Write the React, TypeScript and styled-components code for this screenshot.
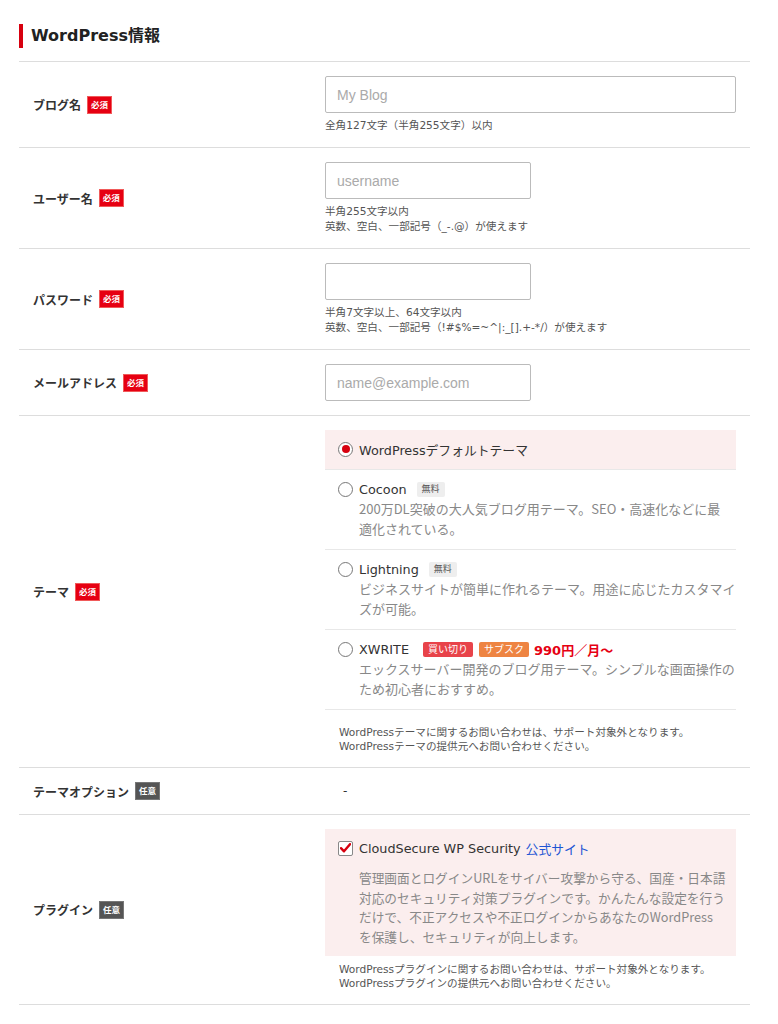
import React from "react";
import styled, { createGlobalStyle } from "styled-components";

const GlobalStyle = createGlobalStyle`
  body {
    margin: 0;
    background: #fff;
    color: #333;
    font-family: "DejaVu Sans", "Noto Sans CJK JP", sans-serif;
  }
`;

const Page = styled.div`
  padding: 24px 28px 20px 19px;
`;

const SectionTitle = styled.h2`
  margin: 0 0 13px;
  border-left: 4px solid #d7000f;
  padding-left: 8px;
  font-size: 16px;
  line-height: 24px;
  font-weight: bold;
  color: #222;
`;

const Table = styled.div`
  border-top: 1px solid #ddd;
`;

const Row = styled.div`
  display: grid;
  grid-template-columns: 306px minmax(0, 1fr);
  border-bottom: 1px solid #ddd;
`;

const LabelCell = styled.div`
  display: flex;
  align-items: center;
  gap: 6px;
  padding-left: 14px;
  font-size: 12px;
  font-weight: bold;
  color: #333;
`;

const ValueCell = styled.div<{ $indent?: boolean }>`
  min-width: 0;
  padding: 14px 14px 14px ${(p) => (p.$indent ? "18px" : "0")};
`;

const Badge = styled.span<{ $optional?: boolean }>`
  display: inline-block;
  background: ${(p) => (p.$optional ? "#555" : "#e60012")};
  color: #fff;
  font-size: 8.5px;
  font-weight: bold;
  line-height: 16px;
  padding: 0 3px;
  border: 1px solid ${(p) => (p.$optional ? "#777" : "#f05a5a")};
`;

const TextInput = styled.input<{ $short?: boolean }>`
  display: block;
  box-sizing: border-box;
  width: ${(p) => (p.$short ? "206px" : "100%")};
  height: 37px;
  border: 1px solid #bbb;
  border-radius: 2px;
  padding: 0 11px;
  font-family: "Liberation Sans", Arial, sans-serif;
  font-size: 14px;
  color: #333;
  &::placeholder {
    color: #aaa;
  }
`;

const Note = styled.div`
  margin-top: 5px;
  font-size: 10.6px;
  line-height: 15px;
  color: #555;
`;

const OptionList = styled.div``;

const Option = styled.div<{ $selected?: boolean }>`
  padding: 9px 13px 10px;
  background: ${(p) => (p.$selected ? "#fbeeee" : "#fff")};
  border-bottom: 1px solid #e8e8e8;
`;

const OptionHead = styled.div`
  display: flex;
  align-items: center;
  height: 20px;
  font-size: 12.8px;
  color: #333;
  white-space: nowrap;
`;

const Radio = styled.span<{ $checked?: boolean }>`
  box-sizing: border-box;
  width: 15px;
  height: 15px;
  margin-right: 6px;
  border-radius: 50%;
  border: 1.5px solid #777;
  background: #fff;
  display: flex;
  align-items: center;
  justify-content: center;
  flex-shrink: 0;
  &::after {
    content: "";
    display: ${(p) => (p.$checked ? "block" : "none")};
    width: 8px;
    height: 8px;
    border-radius: 50%;
    background: #d7000f;
  }
`;

const Tag = styled.span<{ $tone: "free" | "buy" | "sub" }>`
  display: inline-block;
  margin-left: ${(p) => (p.$tone === "sub" ? "6px" : p.$tone === "buy" ? "14px" : "10px")};
  padding: 0 5px;
  line-height: 15px;
  font-size: ${(p) => (p.$tone === "free" ? "9px" : "10px")};
  border-radius: 2px;
  background: ${(p) =>
    p.$tone === "free" ? "#eee" : p.$tone === "buy" ? "#e8434a" : "#ee8442"};
  color: ${(p) => (p.$tone === "free" ? "#555" : "#fff")};
`;

const Price = styled.span`
  margin-left: 5px;
  color: #e60012;
  font-weight: bold;
  font-size: 13px;
`;

const OptionDesc = styled.div`
  padding-left: 21px;
  font-family: "Noto Sans CJK JP", sans-serif;
  font-size: 13px;
  line-height: 20px;
  color: #888;
  white-space: nowrap;
`;

const ThemeNote = styled(Note)`
  margin-top: 15px;
  padding-left: 14px;
  line-height: 14px;
`;

const PluginBox = styled.div`
  background: #fbeeee;
  padding: 9px 13px 10px;
`;

const CheckMark = styled.span`
  box-sizing: border-box;
  width: 15px;
  height: 15px;
  margin-right: 6px;
  border: 1px solid #888;
  border-radius: 2px;
  background: #fff;
  display: flex;
  align-items: center;
  justify-content: center;
  flex-shrink: 0;
`;

const SiteLink = styled.a`
  margin-left: 5px;
  color: #1e55d4;
  text-decoration: none;
`;

const PluginDesc = styled(OptionDesc)`
  margin-top: 10px;
  font-size: 12.7px;
  line-height: 19.5px;
`;

const PluginNote = styled(Note)`
  margin-top: 6px;
  padding-left: 14px;
  line-height: 14px;
`;

const Dash = styled.div`
  font-size: 12px;
  line-height: 18px;
  color: #333;
`;

const Lines = ({ lines }: { lines: string[] }) => (
  <>
    {lines.map((l, i) => (
      <React.Fragment key={i}>
        {i > 0 && <br />}
        {l}
      </React.Fragment>
    ))}
  </>
);

const themes = [
  {
    name: "Cocoon",
    desc: [
      "200万DL突破の大人気ブログ用テーマ。SEO・高速化などに最",
      "適化されている。",
    ],
  },
  {
    name: "Lightning",
    desc: [
      "ビジネスサイトが簡単に作れるテーマ。用途に応じたカスタマイ",
      "ズが可能。",
    ],
  },
];

export default function App() {
  return (
    <Page>
      <GlobalStyle />
      <SectionTitle>WordPress情報</SectionTitle>
      <Table>
        <Row>
          <LabelCell>
            ブログ名<Badge>必須</Badge>
          </LabelCell>
          <ValueCell>
            <TextInput placeholder="My Blog" />
            <Note>全角127文字（半角255文字）以内</Note>
          </ValueCell>
        </Row>
        <Row>
          <LabelCell>
            ユーザー名<Badge>必須</Badge>
          </LabelCell>
          <ValueCell>
            <TextInput $short placeholder="username" />
            <Note>
              半角255文字以内
              <br />
              英数、空白、一部記号（_-.@）が使えます
            </Note>
          </ValueCell>
        </Row>
        <Row>
          <LabelCell>
            パスワード<Badge>必須</Badge>
          </LabelCell>
          <ValueCell>
            <TextInput $short type="password" />
            <Note>
              半角7文字以上、64文字以内
              <br />
              英数、空白、一部記号（!#$%=~^|:_[].+-*/）が使えます
            </Note>
          </ValueCell>
        </Row>
        <Row>
          <LabelCell>
            メールアドレス<Badge>必須</Badge>
          </LabelCell>
          <ValueCell>
            <TextInput $short placeholder="name@example.com" />
          </ValueCell>
        </Row>
        <Row>
          <LabelCell>
            テーマ<Badge>必須</Badge>
          </LabelCell>
          <ValueCell>
            <OptionList>
              <Option $selected>
                <OptionHead>
                  <Radio $checked />
                  WordPressデフォルトテーマ
                </OptionHead>
              </Option>
              {themes.map((t) => (
                <Option key={t.name}>
                  <OptionHead>
                    <Radio />
                    {t.name}
                    <Tag $tone="free">無料</Tag>
                  </OptionHead>
                  <OptionDesc>
                    <Lines lines={t.desc} />
                  </OptionDesc>
                </Option>
              ))}
              <Option>
                <OptionHead>
                  <Radio />
                  XWRITE
                  <Tag $tone="buy">買い切り</Tag>
                  <Tag $tone="sub">サブスク</Tag>
                  <Price>990円／月〜</Price>
                </OptionHead>
                <OptionDesc>
                  <Lines
                    lines={[
                      "エックスサーバー開発のブログ用テーマ。シンプルな画面操作の",
                      "ため初心者におすすめ。",
                    ]}
                  />
                </OptionDesc>
              </Option>
            </OptionList>
            <ThemeNote>
              WordPressテーマに関するお問い合わせは、サポート対象外となります。
              <br />
              WordPressテーマの提供元へお問い合わせください。
            </ThemeNote>
          </ValueCell>
        </Row>
        <Row>
          <LabelCell>
            テーマオプション<Badge $optional>任意</Badge>
          </LabelCell>
          <ValueCell $indent>
            <Dash>-</Dash>
          </ValueCell>
        </Row>
        <Row>
          <LabelCell>
            プラグイン<Badge $optional>任意</Badge>
          </LabelCell>
          <ValueCell>
            <PluginBox>
              <OptionHead>
                <CheckMark>
                  <svg width="11" height="10" viewBox="0 0 11 10">
                    <path
                      d="M1 5.2 L4 8.3 L10 1.2"
                      fill="none"
                      stroke="#d7000f"
                      strokeWidth="2.4"
                      strokeLinecap="round"
                      strokeLinejoin="round"
                    />
                  </svg>
                </CheckMark>
                CloudSecure WP Security
                <SiteLink href="#">公式サイト</SiteLink>
              </OptionHead>
              <PluginDesc>
                <Lines
                  lines={[
                    "管理画面とログインURLをサイバー攻撃から守る、国産・日本語",
                    "対応のセキュリティ対策プラグインです。かんたんな設定を行う",
                    "だけで、不正アクセスや不正ログインからあなたのWordPress",
                    "を保護し、セキュリティが向上します。",
                  ]}
                />
              </PluginDesc>
            </PluginBox>
            <PluginNote>
              WordPressプラグインに関するお問い合わせは、サポート対象外となります。
              <br />
              WordPressプラグインの提供元へお問い合わせください。
            </PluginNote>
          </ValueCell>
        </Row>
      </Table>
    </Page>
  );
}
